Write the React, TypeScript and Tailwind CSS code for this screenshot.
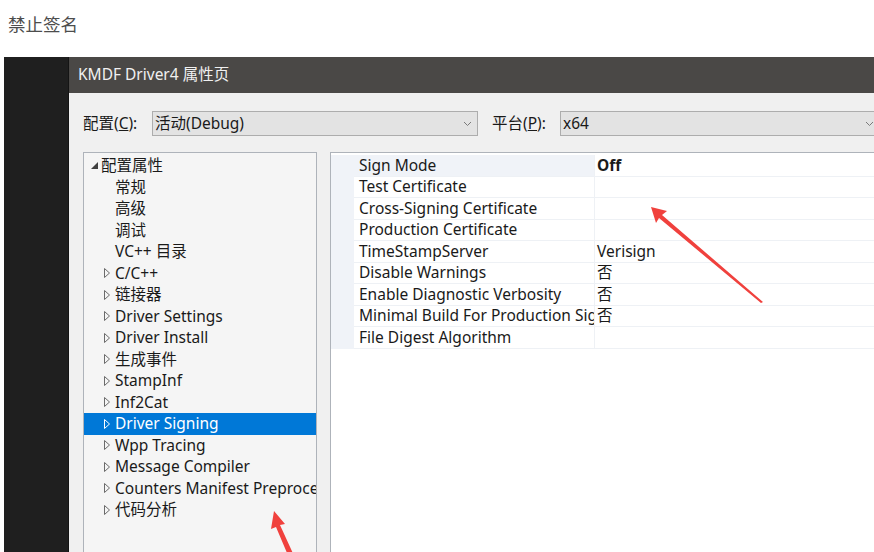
import { ReactNode } from 'react'

const uiFont = "font-['Noto_Sans','Noto_Sans_CJK_SC',sans-serif]"

type TreeItem = { label: string; kind: 'root' | 'leaf' | 'branch'; selected?: boolean }

const treeItems: TreeItem[] = [
    { label: '配置属性', kind: 'root' },
    { label: '常规', kind: 'leaf' },
    { label: '高级', kind: 'leaf' },
    { label: '调试', kind: 'leaf' },
    { label: 'VC++ 目录', kind: 'leaf' },
    { label: 'C/C++', kind: 'branch' },
    { label: '链接器', kind: 'branch' },
    { label: 'Driver Settings', kind: 'branch' },
    { label: 'Driver Install', kind: 'branch' },
    { label: '生成事件', kind: 'branch' },
    { label: 'StampInf', kind: 'branch' },
    { label: 'Inf2Cat', kind: 'branch' },
    { label: 'Driver Signing', kind: 'branch', selected: true },
    { label: 'Wpp Tracing', kind: 'branch' },
    { label: 'Message Compiler', kind: 'branch' },
    { label: 'Counters Manifest Preprocessor', kind: 'branch' },
    { label: '代码分析', kind: 'branch' },
]

const props: { name: string; value: string; bold?: boolean }[] = [
    { name: 'Sign Mode', value: 'Off', bold: true },
    { name: 'Test Certificate', value: '' },
    { name: 'Cross-Signing Certificate', value: '' },
    { name: 'Production Certificate', value: '' },
    { name: 'TimeStampServer', value: 'Verisign' },
    { name: 'Disable Warnings', value: '否' },
    { name: 'Enable Diagnostic Verbosity', value: '否' },
    { name: 'Minimal Build For Production Signing', value: '否' },
    { name: 'File Digest Algorithm', value: '' },
]

function Chevron() {
    return (
        <svg width="9" height="6" viewBox="0 0 9 6" className="shrink-0">
            <path d="M1 1 L4.5 4.5 L8 1" fill="none" stroke="#7a7a7a" strokeWidth="1" />
        </svg>
    )
}

function Combo({ children, className }: { children: ReactNode; className: string }) {
    return (
        <div
            className={`h-[25px] shrink-0 bg-[#e3e3e3] border border-[#adadad] flex items-center pl-[2px] pr-[5px] text-[15.5px] text-[#1a1a1a] ${className}`}
        >
            <span className="flex-1 whitespace-nowrap">{children}</span>
            <Chevron />
        </div>
    )
}

function Arrows() {
    return (
        <svg className="absolute inset-0 pointer-events-none" width="874" height="552" viewBox="0 0 874 552">
            <polygon points="651,207 667,211 662,215 763,302 761,303 659,218 656,223" fill="#f0413d" />
            <polygon points="274,511 285,524 280,525 296,560 290,560 276,527 271,529" fill="#f0413d" />
        </svg>
    )
}

export default function App() {
    return (
        <div className={`relative w-[874px] h-[552px] overflow-hidden bg-white ${uiFont}`}>
            <div className="h-[57px] pl-[8px] pt-[11px] text-[17.5px] leading-[26px] text-[#4d4d4d]">
                禁止签名
            </div>

            <div className="flex h-[495px]">
                <div className="ml-[4px] w-[65px] shrink-0 bg-[#1f1f1f] border-r border-[#141414]" />

                <div className="flex-1 flex flex-col min-w-0">
                    <div className="h-[36px] shrink-0 bg-[#4a4846] pl-[9px] flex items-center text-[15.5px] text-[#f0f0f0]">
                        KMDF Driver4 属性页
                    </div>

                    <div className="flex-1 bg-[#f0f0f0] pl-[14px] flex flex-col min-h-0">
                        <div className="flex items-center mt-[18px] h-[25px] text-[15.5px] text-[#1a1a1a] whitespace-nowrap">
                            <span className="w-[69px] shrink-0">
                                配置(<span className="underline">C</span>):
                            </span>
                            <Combo className="w-[326px]">活动(Debug)</Combo>
                            <span className="ml-[14px] w-[68px] shrink-0">
                                平台(<span className="underline">P</span>):
                            </span>
                            <Combo className="w-[320px]">x64</Combo>
                        </div>

                        <div className="flex flex-1 mt-[16px] min-h-0">
                            <div className="w-[234px] shrink-0 bg-[#f5f5f5] border border-b-0 border-[#aeb3ba] pt-[2px] overflow-hidden">
                                {treeItems.map((item) => (
                                    <div
                                        key={item.label}
                                        className={`h-[21.5px] flex items-center text-[15.5px] whitespace-nowrap overflow-hidden ${
                                            item.selected ? 'bg-[#0078d7] text-white' : 'text-[#1a1a1a]'
                                        }`}
                                    >
                                        {item.kind === 'root' && (
                                            <>
                                                <span className="w-[17px] shrink-0 flex justify-end pr-[3px]">
                                                    <svg width="7" height="7" viewBox="0 0 7 7">
                                                        <polygon points="7,0 7,7 0,7" fill="#404040" />
                                                    </svg>
                                                </span>
                                                <span>{item.label}</span>
                                            </>
                                        )}
                                        {item.kind === 'leaf' && <span className="pl-[31px]">{item.label}</span>}
                                        {item.kind === 'branch' && (
                                            <>
                                                <span className="w-[31px] shrink-0 flex justify-end pr-[5px]">
                                                    <svg width="6" height="10" viewBox="0 0 6 10">
                                                        <polygon
                                                            points="0.5,0.5 5.5,5 0.5,9.5"
                                                            fill="none"
                                                            stroke={item.selected ? '#ffffff' : '#6b6b6b'}
                                                            strokeWidth="1"
                                                        />
                                                    </svg>
                                                </span>
                                                <span className="shrink-0">{item.label}</span>
                                            </>
                                        )}
                                    </div>
                                ))}
                            </div>

                            <div className="ml-[13px] flex-1 bg-white border-l border-t border-[#aeb3ba] pt-[2px] flex flex-col min-w-0">
                                <div className="flex flex-col">
                                    {props.map((p, i) => (
                                        <div key={p.name} className="flex h-[21.5px] text-[15.5px] text-[#1a1a1a]">
                                            <div className="w-[23px] shrink-0 bg-[#f0f3f8]" />
                                            <div
                                                className={`w-[241px] shrink-0 pl-[5px] flex items-center overflow-hidden whitespace-nowrap border-b border-r border-[#eef1f5] ${
                                                    i === 0 ? 'bg-[#f0f3f8]' : ''
                                                }`}
                                            >
                                                {p.name}
                                            </div>
                                            <div
                                                className={`flex-1 pl-[2px] flex items-center whitespace-nowrap border-b border-[#eef1f5] ${
                                                    p.bold ? 'font-bold' : ''
                                                }`}
                                            >
                                                {p.value}
                                            </div>
                                        </div>
                                    ))}
                                </div>
                            </div>
                        </div>
                    </div>
                </div>
            </div>

            <Arrows />
        </div>
    )
}
